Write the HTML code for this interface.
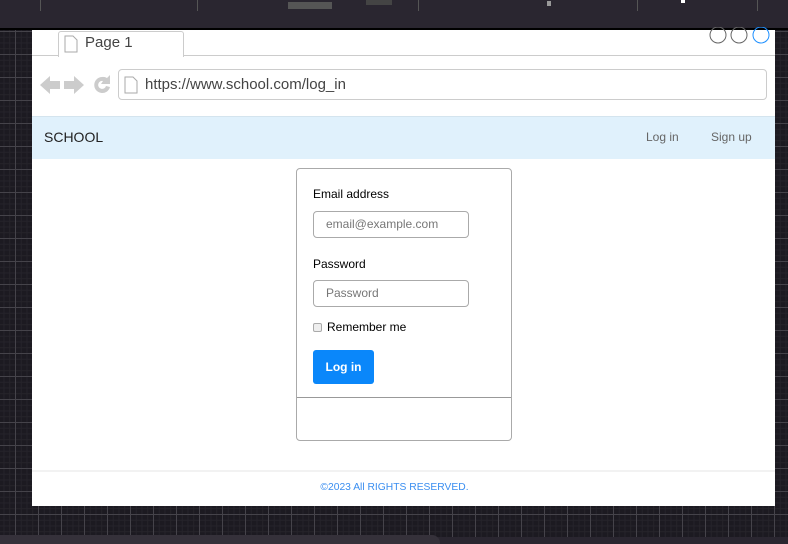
<!DOCTYPE html>
<html><head><style>
*{margin:0;padding:0;box-sizing:border-box}
body{width:788px;height:544px;overflow:hidden;position:relative;font-family:"Liberation Sans",Arial,sans-serif;
background-color:#1c1a21;
background-image:linear-gradient(#45434a 1px,transparent 1px),linear-gradient(90deg,#45434a 1px,transparent 1px),linear-gradient(#26242b 1px,transparent 1px),linear-gradient(90deg,#26242b 1px,transparent 1px);
background-size:23px 23px,23px 23px,5.75px 5.75px,5.75px 5.75px;background-position:-8px 8px,-8px 8px,-8px 8px,-8px 8px}
.top{position:absolute;left:0;top:0;width:788px;height:28px;background:#2a2630}
.top i{position:absolute;top:0;width:1px;height:11px;background:#555}
.blk{position:absolute;left:0;top:28px;width:788px;height:2px;background:#000}
.frame{position:absolute;left:32px;top:30px;width:743px;height:476px;background:#fff}
.bot{position:absolute;left:0;top:537px;width:788px;height:7px;background:#2a2630}
.bot2{position:absolute;left:0;top:535px;width:440px;height:9px;background:#35313a;border-radius:0 8px 0 0}
</style></head><body>
<div class="top"><i style="left:40px"></i><i style="left:197px"></i><i style="left:418px"></i><i style="left:637px"></i><i style="left:757px"></i>
<div style="position:absolute;left:288px;top:2px;width:44px;height:7px;background:#555"></div>
<div style="position:absolute;left:366px;top:0;width:26px;height:5px;background:#444"></div>
<div style="position:absolute;left:547px;top:1px;width:4px;height:5px;background:#999"></div>
<div style="position:absolute;left:681px;top:0;width:4px;height:3px;background:#fff"></div>
</div>
<div class="blk"></div>
<div class="frame">
 <div style="position:absolute;left:0;top:25px;width:743px;height:1px;background:#ccc"></div>
 <div style="position:absolute;left:26px;top:1px;width:126px;height:26px;background:#fff;border:1px solid #ccc;border-bottom:none;border-radius:3px 3px 0 0"></div>
 <svg style="position:absolute;left:32px;top:5px" width="14" height="18"><path d="M1 1H9L13 5V17H1Z" fill="#fff" stroke="#aaa"/></svg>
 <div style="position:absolute;left:53px;top:4px;font-size:15px;color:#444">Page 1</div>
 <svg style="position:absolute;left:677px;top:-3px" width="66" height="18"><circle cx="9" cy="8" r="8" fill="none" stroke="#666"/><circle cx="30" cy="8" r="8" fill="none" stroke="#666"/><circle cx="52" cy="8" r="8" fill="none" stroke="#1e90ff"/></svg>
 <svg style="position:absolute;left:8px;top:44px" width="74" height="22" fill="#ccc"><path d="M0 11L10 2V7H20V15H10V20Z"/><path d="M44 11L34 2V7H24V15H34V20Z"/><path d="M62 3A8 8 0 1 0 70 13L66 12A4 4 0 1 1 63 7L61 10H70V1L67 4A8 8 0 0 0 62 3Z"/></svg>
 <div style="position:absolute;left:86px;top:39px;width:649px;height:31px;border:1px solid #ccc;border-radius:4px"></div>
 <svg style="position:absolute;left:92px;top:46px" width="14" height="18"><path d="M1 1H9L13 5V17H1Z" fill="#fff" stroke="#aaa"/></svg>
 <div style="position:absolute;left:113px;top:46px;font-size:15px;color:#444">https://www.school.com/log_in</div>
 <div style="position:absolute;left:0;top:86px;width:743px;height:43px;background:#e0f1fc;border-top:1px solid #d4e4ee"></div>
 <div style="position:absolute;left:12px;top:99px;font-size:14px;color:#222">SCHOOL</div>
 <div style="position:absolute;left:614px;top:100px;font-size:12px;color:#666">Log in</div>
 <div style="position:absolute;left:679px;top:100px;font-size:12px;color:#666">Sign up</div>
 <div style="position:absolute;left:264px;top:138px;width:216px;height:273px;border:1px solid #aaa;border-radius:4px">
  <div style="position:absolute;left:16px;top:18px;font-size:12px;color:#000">Email address</div>
  <div style="position:absolute;left:16px;top:42px;width:156px;height:27px;border:1px solid #aaa;border-radius:4px;font-size:12px;color:#777;padding:5px 0 0 12px">email@example.com</div>
  <div style="position:absolute;left:16px;top:88px;font-size:12px;color:#000">Password</div>
  <div style="position:absolute;left:16px;top:111px;width:156px;height:27px;border:1px solid #aaa;border-radius:4px;font-size:12px;color:#777;padding:5px 0 0 12px">Password</div>
  <div style="position:absolute;left:16px;top:154px;width:9px;height:9px;border:1px solid #aaa;background:#eee;border-radius:2px"></div>
  <div style="position:absolute;left:30px;top:151px;font-size:12px;color:#000">Remember me</div>
  <div style="position:absolute;left:16px;top:181px;width:61px;height:34px;background:#0a87fa;border-radius:3px;color:#fff;font-size:12px;font-weight:bold;text-align:center;line-height:34px">Log in</div>
  <div style="position:absolute;left:0;top:228px;width:214px;height:1px;background:#999"></div>
 </div>
 <div style="position:absolute;left:0;top:440px;width:743px;height:2px;background:#f2f2f2"></div>
 <div style="position:absolute;left:-9px;top:452px;width:743px;text-align:center;font-size:10.3px;color:#3a8ef0">©2023 All RIGHTS RESERVED.</div>
</div>
<div class="bot"></div><div class="bot2"></div>
</body></html>
